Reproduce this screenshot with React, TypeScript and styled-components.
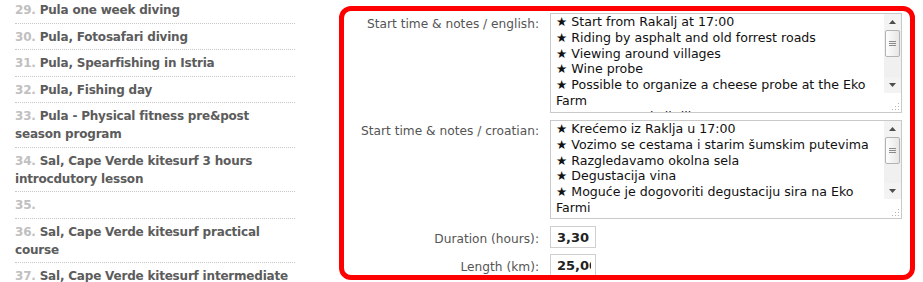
import React from 'react'
import styled, { createGlobalStyle } from 'styled-components'

const GlobalStyle = createGlobalStyle`
    html, body {
        margin: 0;
        padding: 0;
        background: #fff;
        overflow: hidden;
    }
    body {
        font-family: 'DejaVu Sans', Verdana, sans-serif;
    }
`

interface Tour {
    num: number
    title: string
}

const tours: Tour[] = [
    { num: 29, title: 'Pula one week diving' },
    { num: 30, title: 'Pula, Fotosafari diving' },
    { num: 31, title: 'Pula, Spearfishing in Istria' },
    { num: 32, title: 'Pula, Fishing day' },
    { num: 33, title: 'Pula - Physical fitness pre&post season program' },
    { num: 34, title: 'Sal, Cape Verde kitesurf 3 hours introcdutory lesson' },
    { num: 35, title: '' },
    { num: 36, title: 'Sal, Cape Verde kitesurf practical course' },
    { num: 37, title: 'Sal, Cape Verde kitesurf intermediate' },
]

const notesEnglish = [
    '★ Start from Rakalj at 17:00',
    '★ Riding by asphalt and old forrest roads',
    '★ Viewing around villages',
    '★ Wine probe',
    '★ Possible to organize a cheese probe at the Eko',
    'Farm',
    '★ Return to Rakalj till 21:00',
]

const notesCroatian = [
    '★ Krećemo iz Raklja u 17:00',
    '★ Vozimo se cestama i starim šumskim putevima',
    '★ Razgledavamo okolna sela',
    '★ Degustacija vina',
    '★ Moguće je dogovoriti degustaciju sira na Eko',
    'Farmi',
    '★ Povratak u Rakalj do 21:00',
]

function NotesBox({ lines, height }: { lines: string[]; height: number }) {
    return (
        <NotesFrame $height={height}>
            <NotesText>
                {lines.map((line, i) => (
                    <NotesLine key={i}>{line}</NotesLine>
                ))}
            </NotesText>
            <Scrollbar>
                <ScrollButton>
                    <svg width="7" height="4" viewBox="0 0 7 4">
                        <path d="M0 4 L3.5 0 L7 4 Z" fill="#4d4d4d" />
                    </svg>
                </ScrollButton>
                <ScrollTrack>
                    <ScrollThumb>
                        <svg width="7" height="7" viewBox="0 0 7 7">
                            <path d="M0 1.5 H7 M0 3.5 H7 M0 5.5 H7" stroke="#8a8a8a" strokeWidth="1" />
                        </svg>
                    </ScrollThumb>
                </ScrollTrack>
                <ScrollButton>
                    <svg width="7" height="4" viewBox="0 0 7 4">
                        <path d="M0 0 L3.5 4 L7 0 Z" fill="#4d4d4d" />
                    </svg>
                </ScrollButton>
                <ResizeCorner>
                    <svg width="9" height="9" viewBox="0 0 9 9">
                        <rect x="7" y="1" width="1" height="1" fill="#b5b5b5" />
                        <rect x="4" y="4" width="1" height="1" fill="#b5b5b5" />
                        <rect x="7" y="4" width="1" height="1" fill="#b5b5b5" />
                        <rect x="1" y="7" width="1" height="1" fill="#b5b5b5" />
                        <rect x="4" y="7" width="1" height="1" fill="#b5b5b5" />
                        <rect x="7" y="7" width="1" height="1" fill="#b5b5b5" />
                    </svg>
                </ResizeCorner>
            </Scrollbar>
        </NotesFrame>
    )
}

export default function App() {
    return (
        <Page>
            <GlobalStyle />
            <TourList>
                {tours.map((tour) => (
                    <TourItem key={tour.num}>
                        <TourNum>{tour.num}.</TourNum> {tour.title && <TourTitle>{tour.title}</TourTitle>}
                    </TourItem>
                ))}
            </TourList>
            <Highlight>
                <FormRow $gap={7}>
                    <Label>Start time &amp; notes / english:</Label>
                    <NotesBox lines={notesEnglish} height={100} />
                </FormRow>
                <FormRow $gap={7}>
                    <Label>Start time &amp; notes / croatian:</Label>
                    <NotesBox lines={notesCroatian} height={99} />
                </FormRow>
                <FormRow $gap={6} $center>
                    <Label>Duration (hours):</Label>
                    <SmallInput readOnly value="3,30" />
                </FormRow>
                <FormRow $gap={0} $center>
                    <Label>Length (km):</Label>
                    <SmallInput readOnly value="25,00" />
                </FormRow>
            </Highlight>
        </Page>
    )
}

const Page = styled.div`
    display: flex;
    align-items: flex-start;
    gap: 44px;
    padding-left: 15px;
    width: 923px;
    height: 282px;
    box-sizing: border-box;
    overflow: hidden;
`

const TourList = styled.ul`
    list-style: none;
    margin: -3px 0 0 0;
    padding: 0;
    width: 280px;
    flex-shrink: 0;
`

const TourItem = styled.li`
    padding: 4px 0 3.5px;
    border-bottom: 1px dotted #c8c8c8;
    font-size: 12px;
    line-height: 18px;
    font-weight: bold;
    letter-spacing: -0.2px;
`

const TourNum = styled.span`
    color: #c0c0c0;
`

const TourTitle = styled.span`
    color: #5c5c5c;
`

const Highlight = styled.div`
    margin-top: 6px;
    width: 576px;
    height: 274px;
    box-sizing: border-box;
    border: 5px solid #f00;
    border-radius: 12px;
    padding: 2px 8px 0 0;
    display: flex;
    flex-direction: column;
    overflow: hidden;
    flex-shrink: 0;
`

const FormRow = styled.div<{ $gap: number; $center?: boolean }>`
    display: flex;
    align-items: ${(p) => (p.$center ? 'center' : 'flex-start')};
    gap: 11px;
    margin-bottom: ${(p) => p.$gap}px;
`

const Label = styled.div`
    width: 195px;
    flex-shrink: 0;
    text-align: right;
    font-size: 12.2px;
    line-height: 16px;
    color: #555;
    padding-top: 3px;
`

const NotesFrame = styled.div<{ $height: number }>`
    width: 352px;
    height: ${(p) => p.$height}px;
    box-sizing: border-box;
    border: 1px solid #c9c9c9;
    display: flex;
    background: #fff;
`

const NotesText = styled.div`
    flex: 1;
    overflow: hidden;
    padding: 0 5px;
    font-size: 12.6px;
    line-height: 15.8px;
    color: #111;
`

const NotesLine = styled.div`
    white-space: nowrap;
`

const Scrollbar = styled.div`
    width: 17px;
    flex-shrink: 0;
    display: flex;
    flex-direction: column;
    background: #f3f3f3;
`

const ScrollButton = styled.div`
    height: 16px;
    display: flex;
    align-items: center;
    justify-content: center;
    background: #f3f3f3;
`

const ScrollTrack = styled.div`
    flex: 1;
    display: flex;
    flex-direction: column;
    background: #f0f0f0;
`

const ScrollThumb = styled.div`
    height: 27px;
    margin: 0 1px;
    box-sizing: border-box;
    border: 1px solid #b3b3b3;
    border-radius: 2px;
    background: linear-gradient(to right, #fdfdfd, #e6e6e6);
    display: flex;
    align-items: center;
    justify-content: center;
`

const ResizeCorner = styled.div`
    height: 18px;
    background: #fff;
    display: flex;
    align-items: flex-end;
    justify-content: flex-end;
    padding: 0 1px 1px 0;
`

const SmallInput = styled.input`
    width: 46px;
    height: 22px;
    box-sizing: border-box;
    border: 1px solid #cfcfcf;
    padding: 0 4px 0 6px;
    margin: 0;
    font-family: 'DejaVu Sans', Verdana, sans-serif;
    font-size: 13px;
    font-weight: bold;
    color: #222;
    outline: none;
    background: #fff;
`
